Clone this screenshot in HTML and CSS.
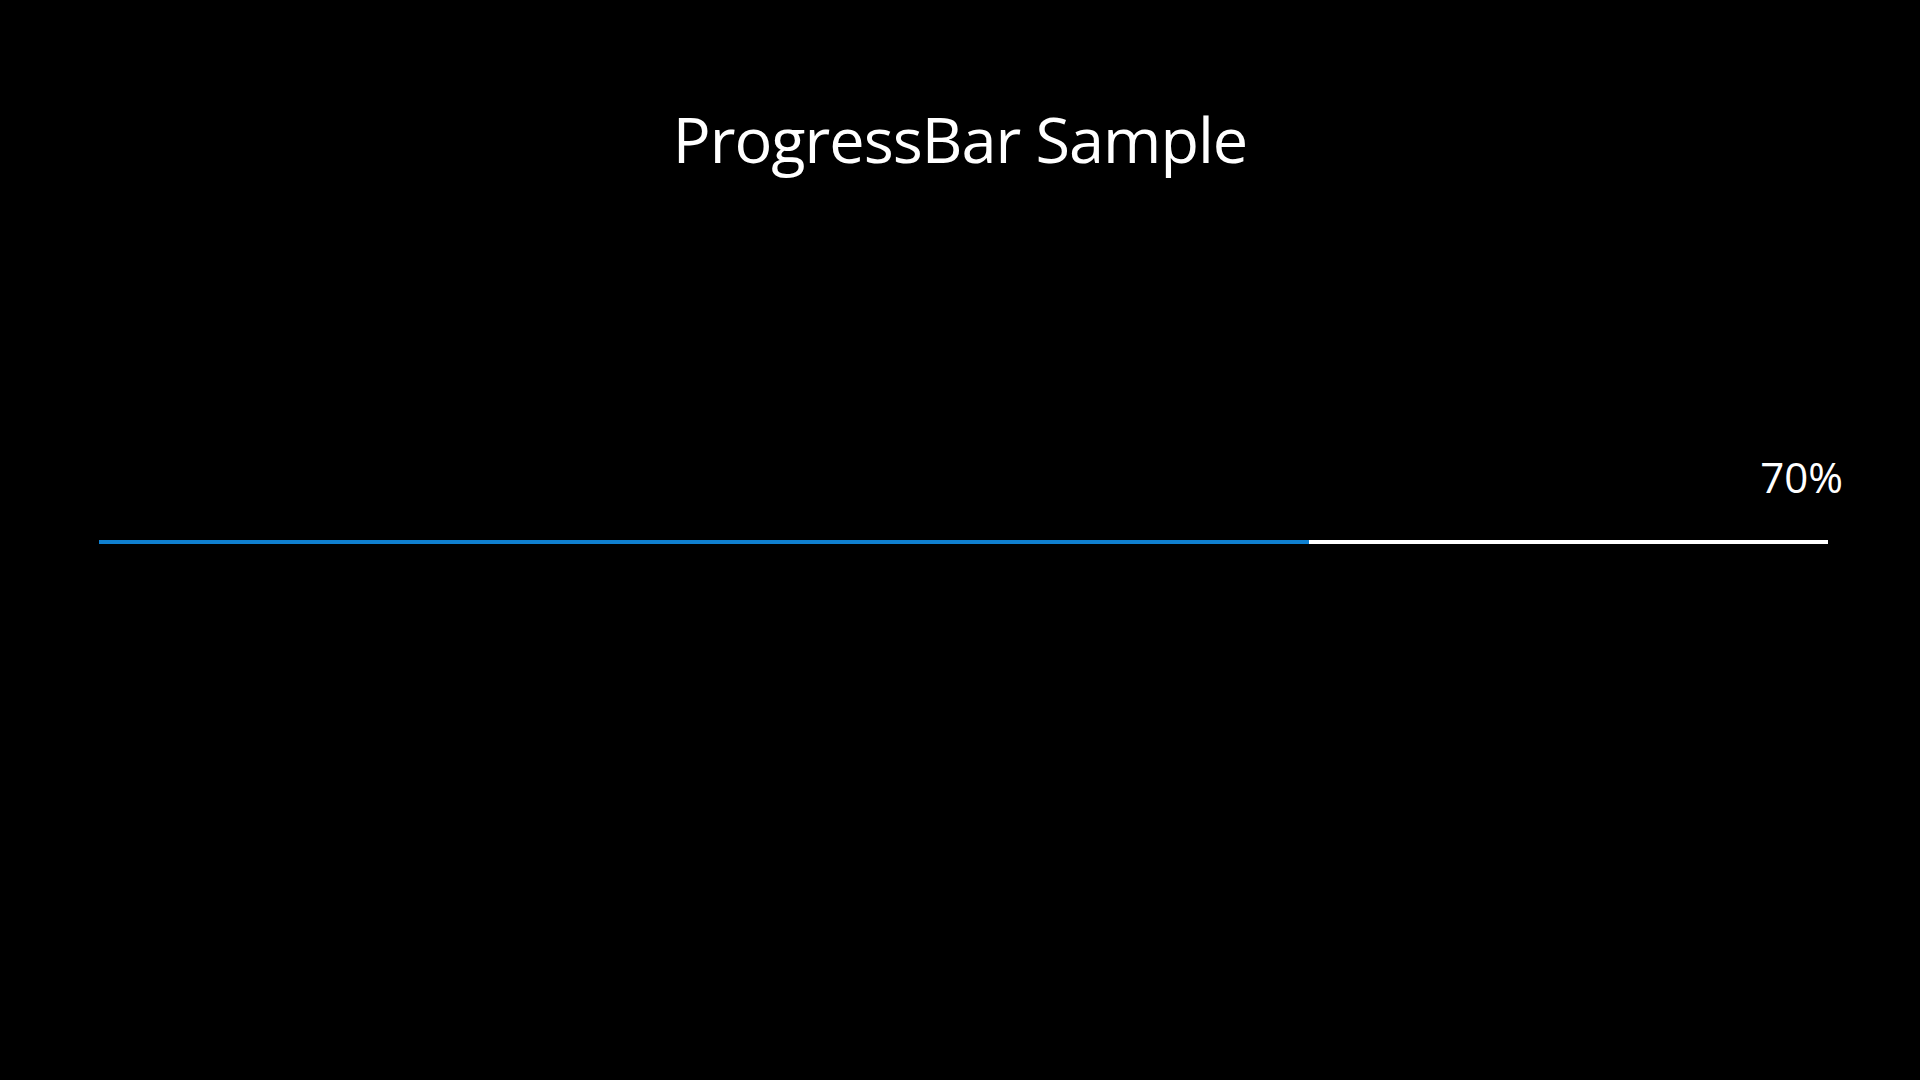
FILE: index.html
```html
<!DOCTYPE html>
<html lang="en">
<head>
    <meta charset="UTF-8">
    <title>ProgressBar Sample</title>
    <link rel="stylesheet" href="styles.css">
</head>
<body>

<h1 class="title">ProgressBar Sample</h1>

<div class="progress-wrap">
    <div class="progress-value">70%</div>
    <div class="progress-track">
        <div class="progress-fill" style="width: 70%;"></div>
    </div>
</div>

</body>
</html>
```

FILE: styles.css
```css
body {
    margin: 0;
    padding: 0;
    background-color: #000;
    color: #fff;
    font-family: "Open Sans", sans-serif;
    height: 1080px;
    overflow: hidden;
}

.title {
    margin: 0;
    padding-top: 96px;
    font-size: 63px;
    font-weight: 400;
    line-height: 86px;
    text-align: center;
    letter-spacing: -1px;
}

.progress-wrap {
    padding: 0 77px 0 99px;
    margin-top: 269px;
}

.progress-value {
    text-align: right;
    font-size: 42px;
    line-height: 52px;
}

.progress-track {
    height: 4px;
    margin-top: 37px;
    margin-right: 15px;
    background-color: #fff;
}

.progress-fill {
    height: 100%;
    background-color: #0f80d0;
}
```
